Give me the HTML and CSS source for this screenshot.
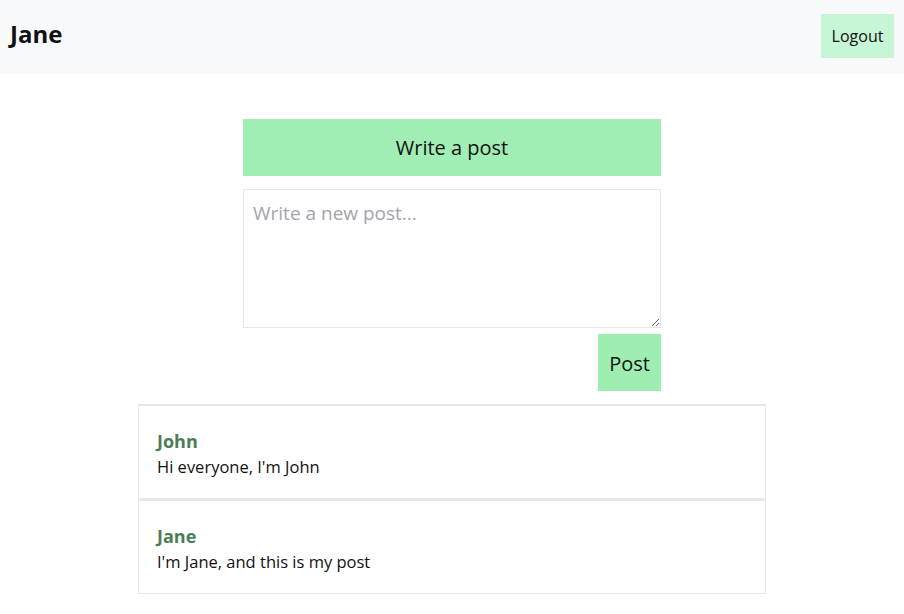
FILE: index.html
```html
<!DOCTYPE html>
<html lang="en">
<head>
<meta charset="utf-8">
<title>Feed</title>
<link rel="stylesheet" href="styles.css">
</head>
<body>
<header class="topbar">
  <h1 class="brand">Jane</h1>
  <button class="logout">Logout</button>
</header>
<main class="main">
  <section class="composer">
    <div class="composer-title">Write a post</div>
    <textarea class="composer-input" placeholder="Write a new post..."></textarea>
    <div class="composer-actions">
      <button class="post-btn">Post</button>
    </div>
  </section>
  <section class="feed">
    <article class="card">
      <div class="card-author">John</div>
      <div class="card-body">Hi everyone, I'm John</div>
    </article>
    <article class="card">
      <div class="card-author">Jane</div>
      <div class="card-body">I'm Jane, and this is my post</div>
    </article>
  </section>
</main>
</body>
</html>
```
FILE: styles.css
```css
* { box-sizing: border-box; }
body {
  margin: 0;
  font-family: "Open Sans", "Noto Sans", sans-serif;
  color: #111;
  background: #fff;
}
.topbar {
  height: 74px;
  background: #f8f9fb;
  display: flex;
  align-items: center;
  justify-content: space-between;
  padding: 0 10px;
}
.brand {
  margin: 0 0 6px 0;
  font-size: 24px;
  font-weight: 700;
  line-height: 1;
}
.logout {
  font-family: inherit;
  font-size: 16px;
  color: #111;
  background: #c6f6d5;
  border: 0;
  height: 44px;
  width: 73px;
  padding: 0;
  margin: 0 0 2px 0;
}
.main {
  display: flex;
  flex-direction: column;
  align-items: center;
  padding-top: 45px;
}
.composer {
  width: 418px;
  display: flex;
  flex-direction: column;
}
.composer-title {
  height: 57px;
  background: #a0eeb3;
  display: flex;
  align-items: center;
  justify-content: center;
  font-size: 20px;
}
.composer-input {
  margin-top: 13px;
  height: 139px;
  border: 1px solid #e5e7eb;
  padding: 10px 9px;
  font-family: inherit;
  font-size: 19px;
  resize: vertical;
  outline: none;
}
.composer-input::placeholder { color: #a3a3ad; }
.composer-actions {
  display: flex;
  justify-content: flex-end;
  margin-top: 6px;
}
.post-btn {
  font-family: inherit;
  font-size: 20px;
  color: #111;
  background: #9eeeb2;
  border: 0;
  width: 63px;
  height: 57px;
  padding: 2px 0 0 0;
}
.feed {
  margin-top: 13px;
  width: 628px;
  border: 1px solid #e5e7eb;
  border-top-width: 2px;
}
.card {
  padding: 22px 18px 19px;
}
.card + .card { border-top: 3px solid #e5e7eb; }
.card-author {
  font-size: 18px;
  font-weight: 700;
  color: #4a7d56;
  line-height: 27px;
}
.card-body {
  font-size: 16.5px;
  line-height: 24px;
}
```
